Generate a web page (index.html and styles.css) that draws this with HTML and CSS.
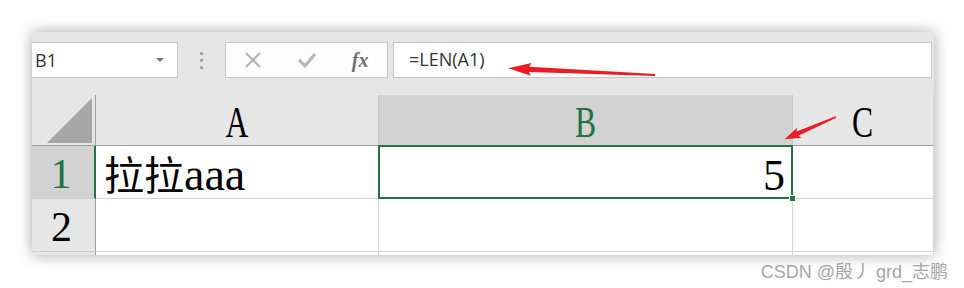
FILE: index.html
```html
<!DOCTYPE html>
<html lang="zh-CN">
<head>
    <meta charset="UTF-8">
    <title>LEN</title>
    <link rel="stylesheet" href="styles.css">
</head>
<body>

    <div class="window">
        <div class="toolbar">
            <div class="namebox">
                <span>B1</span>
                <span class="caret"></span>
            </div>
            <div class="grip"><i></i><i></i><i></i></div>
            <div class="fbuttons">
                <span class="fbtn">
                    <svg width="18" height="18" viewBox="0 0 18 18"><path d="M2 2 L16 16 M16 2 L2 16" stroke="#b3b3b3" stroke-width="2" fill="none"/></svg>
                </span>
                <span class="fbtn">
                    <svg width="20" height="18" viewBox="0 0 20 18"><path d="M2 9 L8 15 L18 3" stroke="#b8b8b8" stroke-width="3.2" fill="none"/></svg>
                </span>
                <span class="fbtn fx">fx</span>
            </div>
            <div class="formula">=LEN(A1)</div>
        </div>

        <div class="sheet">
            <div class="corner"><div class="tri"></div></div>
            <div class="colhead"><span class="letter">A</span></div>
            <div class="colhead active"><span class="letter">B</span></div>
            <div class="colhead last"><span class="letter">C</span></div>

            <div class="rowhead active">1</div>
            <div class="cell text">拉拉<span class="latin">aaa</span></div>
            <div class="cell num selected">5</div>
            <div class="cell last"></div>

            <div class="rowhead">2</div>
            <div class="cell"></div>
            <div class="cell"></div>
            <div class="cell last"></div>

            <div class="rowhead stub"></div>
            <div class="cell stub"></div>
            <div class="cell stub"></div>
            <div class="cell stub last"></div>
        </div>
    </div>

    <div class="watermark">CSDN @殷丿 grd_志鹏</div>

    <!-- red annotation arrows drawn over the screenshot -->
    <svg class="marks" width="964" height="288" viewBox="0 0 964 288">
        <g transform="translate(655 75) rotate(182.6)">
            <path d="M0 -0.9 L126 -2.6 L124 -6.5 L147 0 L124 6.5 L126 2.6 L0 0.9 Z" fill="#ec1c24"/>
        </g>
        <g transform="translate(836 117) rotate(156.7)">
            <path d="M0 -0.9 L42 -2.2 L40 -5.5 L56 0 L40 5.5 L42 2.2 L0 0.9 Z" fill="#ec1c24"/>
        </g>
    </svg>

</body>
</html>
```

FILE: styles.css
```css
body {
    margin: 0;
    background-color: #fff;
    position: relative;
    width: 964px;
    height: 288px;
    overflow: hidden;
}

.window {
    margin: 32px 0 0 32px;
    width: 902px;
    background-color: #e6e6e6;
    box-shadow: 0 0 14px rgba(0, 0, 0, 0.35);
}

/* formula bar */
.toolbar {
    display: flex;
    height: 63px;
    padding-top: 10px;
    box-sizing: border-box;
    font-family: 'Open Sans', 'Noto Sans', sans-serif;
    font-size: 18px;
    color: #333;
}

.namebox {
    width: 146px;
    height: 36px;
    box-sizing: border-box;
    border: 1px solid #c6c6c6;
    border-left: none;
    background-color: #fff;
    display: flex;
    align-items: center;
    justify-content: space-between;
    padding: 0 13px 0 3px;
}

.caret {
    width: 0;
    height: 0;
    border-left: 4px solid transparent;
    border-right: 4px solid transparent;
    border-top: 4px solid #777;
}

.grip {
    width: 47px;
    height: 36px;
    display: flex;
    flex-direction: column;
    align-items: center;
    justify-content: center;
    gap: 4px;
}

.grip i {
    width: 3px;
    height: 3px;
    background-color: #a6a6a6;
}

.fbuttons {
    width: 163px;
    height: 36px;
    box-sizing: border-box;
    border: 1px solid #c6c6c6;
    background-color: #fdfdfd;
    display: flex;
}

.fbtn {
    width: 54px;
    display: flex;
    align-items: center;
    justify-content: center;
}

.fx {
    font-family: 'Liberation Serif', serif;
    font-style: italic;
    font-weight: bold;
    font-size: 20px;
    color: #707070;
}

.formula {
    flex: 1;
    height: 36px;
    margin: 0 2px 0 5px;
    box-sizing: border-box;
    border: 1px solid #c6c6c6;
    background-color: #fff;
    padding-left: 15px;
    line-height: 32px;
}

/* grid */
.sheet {
    display: grid;
    grid-template-columns: 64px 283px 414px 1fr;
    grid-template-rows: 51px 53px 53px 3px;
    background-color: #fff;
    font-family: 'Liberation Serif', 'Noto Sans CJK SC', serif;
    color: #000;
}

.corner {
    background-color: #e6e6e6;
    border-right: 1px solid #9e9e9e;
    border-bottom: 1px solid #9e9e9e;
    box-sizing: border-box;
    display: flex;
    justify-content: flex-end;
    align-items: flex-end;
    padding: 0 3px 2px 0;
}

.tri {
    width: 45px;
    height: 45px;
    background-color: #a6a6a6;
    clip-path: polygon(100% 0, 100% 100%, 0 100%);
}

.colhead {
    background-color: #e6e6e6;
    border-right: 1px solid #c8c8c8;
    border-bottom: 1px solid #9e9e9e;
    box-sizing: border-box;
    text-align: center;
    font-size: 44px;
    line-height: 51px;
    padding-top: 2px;
}

.colhead.active {
    background-color: #d2d2d2;
    color: #217346;
}

.colhead.last,
.cell.last {
    border-right: 1px solid #d4d4d4;
}

.letter {
    display: inline-block;
    transform: scaleX(0.72);
}

.rowhead {
    background-color: #e6e6e6;
    border-right: 1px solid #9e9e9e;
    border-bottom: 1px solid #d0d0d0;
    box-sizing: border-box;
    text-align: center;
    font-size: 42px;
    line-height: 53px;
    padding: 2px 4px 0 0;
}

.rowhead.active {
    background-color: #d2d2d2;
    color: #217346;
    border-right: 2px solid #217346;
}

.cell {
    border-right: 1px solid #d4d4d4;
    border-bottom: 1px solid #d4d4d4;
    box-sizing: border-box;
}

.cell.text {
    font-size: 40px;
    line-height: 53px;
    padding: 2px 0 0 8px;
}

.latin {
    font-family: 'Liberation Serif', serif;
    font-size: 46px;
}

.cell.num {
    font-size: 44px;
    line-height: 53px;
    text-align: right;
    padding: 3px 7px 0 0;
}

.stub {
    border-bottom: none;
}

.selected {
    position: relative;
}

.selected::after {
    content: "";
    position: absolute;
    left: -1px;
    top: -1px;
    right: -1px;
    bottom: -1px;
    border: 2px solid #217346;
}

.selected::before {
    content: "";
    position: absolute;
    right: -4px;
    bottom: -4px;
    width: 5px;
    height: 5px;
    background-color: #217346;
    border: 1px solid #fff;
    z-index: 1;
}

.watermark {
    margin-top: 7px;
    padding-right: 16px;
    text-align: right;
    font-family: 'Liberation Sans', 'Noto Sans CJK SC', sans-serif;
    font-size: 18px;
    line-height: 20px;
    color: #a6a6a6;
}

.marks {
    position: absolute;
    left: 0;
    top: 0;
    pointer-events: none;
}
```
